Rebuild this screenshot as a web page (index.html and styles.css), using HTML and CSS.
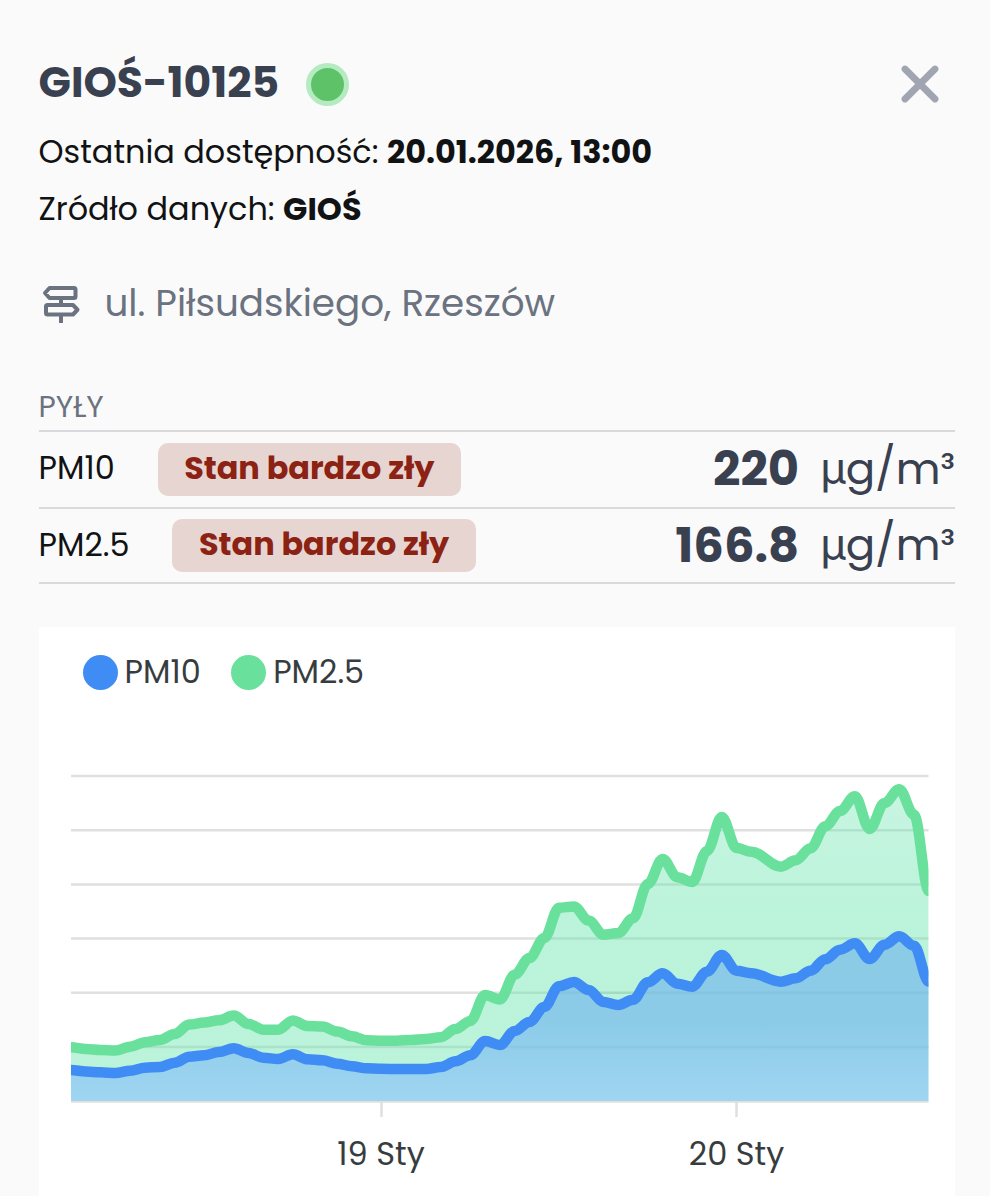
FILE: index.html
```html
<!DOCTYPE html>
<html lang="pl">
<head>
    <meta charset="UTF-8">
    <meta name="viewport" content="width=device-width, initial-scale=1.0">
    <title>GIOŚ-10125</title>
    <link rel="stylesheet" href="styles.css">
</head>
<body>
    <div class="panel">
        <div class="header">
            <h1>GIOŚ-10125</h1>
            <span class="status"></span>
            <button class="close" aria-label="Zamknij">
                <svg width="38" height="38" viewBox="0 0 38 38"><path d="M4 4 34 34M34 4 4 34"/></svg>
            </button>
        </div>

        <div class="info">
            <p>Ostatnia dostępność: <b>20.01.2026, 13:00</b></p>
            <p>Zródło danych: <b>GIOŚ</b></p>
        </div>

        <div class="address">
            <svg width="40" height="40" viewBox="0 0 40 40">
                <path d="M8.5 5H33a1.500 1.500 0 0 1 1.500 1.500V13.500a1.500 1.500 0 0 1-1.500 1.500H8.500L4 10Z"/>
                <path d="M6.500 22H32l4.500 4.750-4.500 4.750H6.500A1.500 1.500 0 0 1 5 30V23.500a1.500 1.500 0 0 1 1.500-1.500Z"/>
                <path d="M20 15v7M20 31.500V40"/>
            </svg>
            <span>ul. Piłsudskiego, Rzeszów</span>
        </div>

        <h2>PYŁY</h2>
        <div class="row row-pm10">
            <span class="name">PM10</span>
            <span class="badge">Stan bardzo zły</span>
            <span class="value">220</span>
            <span class="unit">μg/m³</span>
        </div>
        <div class="row row-pm25">
            <span class="name">PM2.5</span>
            <span class="badge">Stan bardzo zły</span>
            <span class="value">166.8</span>
            <span class="unit">μg/m³</span>
        </div>

        <div class="chart">
            <div class="legend">
                <span class="marker pm10"></span><span>PM10</span>
                <span class="marker pm25"></span><span>PM2.5</span>
            </div>
            <svg class="plot" width="916" height="480" viewBox="39 720 916 480">
                <defs>
                    <linearGradient id="green" x1="0" y1="0" x2="0" y2="1">
                        <stop offset="0" stop-color="#69e4ae" stop-opacity="0.37"/>
                        <stop offset="0.4" stop-color="#69e4ae" stop-opacity="0.45"/>
                        <stop offset="1" stop-color="#69e4ae" stop-opacity="0.45"/>
                    </linearGradient>
                    <linearGradient id="blue" x1="0" y1="0" x2="0" y2="1">
                        <stop offset="0" stop-color="#8bcbe5"/>
                        <stop offset="0.5" stop-color="#8bcbe8"/>
                        <stop offset="1" stop-color="#9fd5f1"/>
                    </linearGradient>
                    <clipPath id="area"><rect x="71" y="740" width="857.5" height="362"/></clipPath>
                </defs>
                <path class="grid" d="M71 776H928.500M71 830.200H928.500M71 884.400H928.500M71 938.600H928.500M71 992.800H928.500M71 1047H928.500M71 1101.500H928.500M381.500 1101V1117M736.500 1101V1117"/>
                <g clip-path="url(#area)">
                    <path id="fill25" fill="url(#green)"/>
                    <path id="fill10" fill="url(#blue)"/>
                    <path class="grid over" d="M555 992.800H929M480 1047H929"/>
                    <path id="line25" class="line pm25"/>
                    <path id="line10" class="line pm10"/>
                </g>
                <text x="381" y="1165">19 Sty</text>
                <text x="736.5" y="1165">20 Sty</text>
            </svg>
        </div>
    </div>

    <script>
        // hourly readings as chart heights, null = no reading
        const left = 71, bottom = 1101, step = 14.79;
        const pm25 = [1047.3, 1049, 1050, 1050.5, 1046.7, 1042.3, 1040, 1034, 1024.5, 1022.6, 1020.3, 1015.6, 1024, 1029.7, 1029.7, 1020.6, 1026, 1026.6, 1031.6, 1036.3, 1040.3, 1040.7, 1040.7, 1040, 1039, 1037.3, 1029, 1021, 995, 999.5, 974.7, 958, 938, 907.7, 906.5, 920.5, 934.7, 933, 918.3, 884, 859, 877.3, 882, 851, 817, 848, 851.7, null, 866.7, 860.3, 848.3, 826.3, 811, 796.3, 829, 803, 789.3, 814.7, 891];
        const pm10 = [1070, 1071.5, 1072.3, 1073, 1070.7, 1067.7, 1067, 1062.7, 1056.7, 1055.3, 1052, 1048.3, 1053, 1057.7, 1059, 1054.3, 1059.3, 1060.3, 1063.7, 1066.3, 1068.3, 1068.8, 1069, 1069, 1069, 1067, 1061.3, 1055.3, 1041, 1045, 1031, 1022, 1007, 986.3, 982, 990, 1002, 1005, 999.7, 982.3, 973.3, 983.7, 986.7, 971.7, 955, 970.7, 973.3, null, 981.7, 978.3, 970.7, 959.3, 949.7, 943.3, 959, 944.7, 936.3, 945.7, 981.7];

        function curve(data) {
            const points = data.map((y, i) => [left + i * step, y]).filter(p => p[1] !== null);
            let d = `M${points[0]}`;
            for (let i = 1; i < points.length; i++) {
                const [x0, y0] = points[i - 1];
                const [x1, y1] = points[i];
                const k = (x1 - x0) * 0.35;
                d += `C${x0 + k} ${y0} ${x1 - k} ${y1} ${x1} ${y1}`;
            }
            return d;
        }

        function draw(id, data) {
            const d = curve(data);
            document.getElementById('line' + id).setAttribute('d', d);
            document.getElementById('fill' + id).setAttribute('d', `${d}V${bottom}H${left}Z`);
        }

        draw('25', pm25);
        draw('10', pm10);
    </script>
</body>
</html>
```
FILE: styles.css
```css
* { margin: 0; padding: 0; box-sizing: border-box; }
body { font-family: Poppins, Inter, 'Noto Sans', sans-serif; font-size: 31.9px; background: #fafafa; color: #111214; overflow: hidden; }
.panel { height: 1196px; padding: 52px 35px 0 38.5px; overflow: hidden; }
.header { display: flex; align-items: center; height: 64px; }
.header h1 { padding-bottom: 4px; font-size: 42.5px; line-height: 60px; font-weight: 700; color: #394050; }
.status { width: 43px; height: 43px; margin-left: 26.5px; border: 5px solid #b5ebc0; border-radius: 50%; background: #5ec269; }
.close { margin: 0 16px 0 auto; border: none; background: none; cursor: pointer; }
.close svg { display: block; fill: none; stroke: #a0a5b1; stroke-width: 6.8; stroke-linecap: round; }
.info { margin-top: 8px; line-height: 57px; }
.address { display: flex; align-items: center; gap: 24px; height: 56px; margin-top: 37px; padding-left: 2px; font-size: 37.3px; color: #6b7280; }
.address svg { fill: none; stroke: #6b7280; stroke-width: 4; stroke-linejoin: round; }
h2 { height: 101px; padding-top: 56px; font-size: 29.8px; line-height: 40px; font-weight: 400; color: #6b7280; border-bottom: 2px solid #d9dade; }
.row { display: flex; align-items: center; border-bottom: 2px solid #d9dade; }
.row-pm10 { height: 77px; }
.row-pm25 { height: 75px; }
.badge { margin-left: 43px; padding: 0 26.5px; height: 53px; line-height: 50px; border-radius: 10px; background: #e6d5d1; color: #8b2213; font-weight: 700; }
.row-pm10 .name { padding-bottom: 3px; }
.row-pm25 .name { padding-bottom: 1px; }
.value { margin-left: auto; padding-bottom: 2px; font-size: 48px; line-height: 60px; font-weight: 700; color: #394050; }
.row-pm25 .value { padding-bottom: 0; }
.unit { margin-left: 21px; padding-bottom: 2px; font-size: 43.5px; line-height: 60px; color: #394050; }
.chart { margin-top: 43px; height: 580px; background: #fff; color: #373d3f; }
.legend { display: flex; align-items: center; height: 93px; padding: 0 44px 3px; }
.marker { width: 35px; height: 35px; margin-right: 7px; border-radius: 50%; }
.marker.pm10 { background: #3f8cf4; }
.marker.pm25 { margin-left: 30.5px; background: #69e09b; }
.plot { display: block; }
.plot text { font-size: 32px; text-anchor: middle; fill: #373d3f; }
.grid { fill: none; stroke: #e0e0e0; stroke-width: 2.5; }
.grid.over { stroke: #000; stroke-opacity: 0.03; }
.line { fill: none; stroke-width: 10.5; }
.line.pm10 { stroke: #3f8cf4; }
.line.pm25 { stroke: #69e09b; }
```
